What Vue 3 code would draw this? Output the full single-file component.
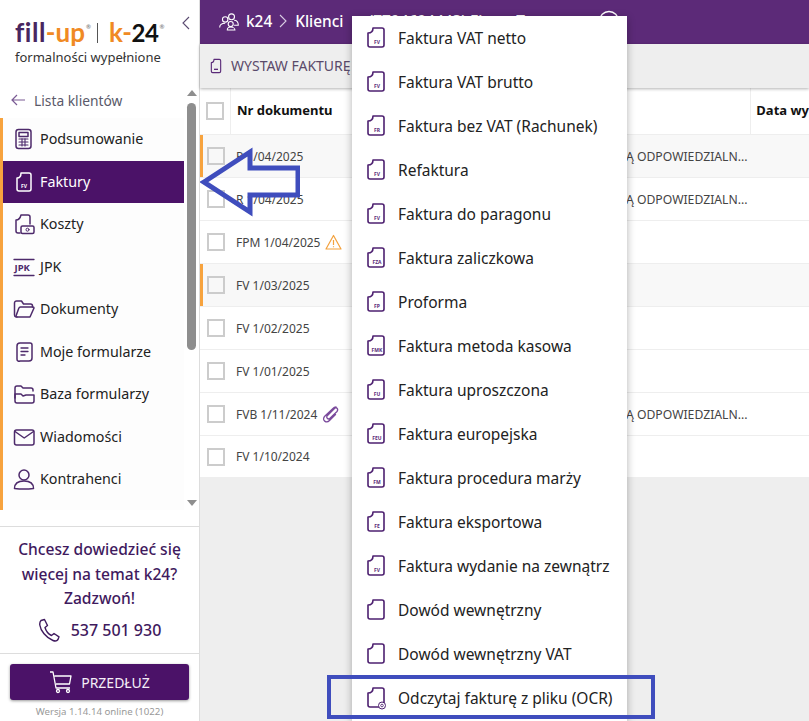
<script setup>
const nav = [
  { label: 'Podsumowanie', icon: 'calc' },
  { label: 'Faktury', icon: 'doc', active: true },
  { label: 'Koszty', icon: 'cost' },
  { label: 'JPK', icon: 'jpk' },
  { label: 'Dokumenty', icon: 'folder' },
  { label: 'Moje formularze', icon: 'form' },
  { label: 'Baza formularzy', icon: 'folders' },
  { label: 'Wiadomości', icon: 'mail' },
  { label: 'Kontrahenci', icon: 'user' }
]
const rows = [
  { no: 'P 1/04/2025', flag: true, odd: true, resp: true },
  { no: 'R 1/04/2025', resp: true },
  { no: 'FPM 1/04/2025', warn: true },
  { no: 'FV 1/03/2025', flag: true, odd: true },
  { no: 'FV 1/02/2025' },
  { no: 'FV 1/01/2025' },
  { no: 'FVB 1/11/2024', clip: true, resp: true },
  { no: 'FV 1/10/2024' }
]
const menu = [
  ['Faktura VAT netto', 'FV'],
  ['Faktura VAT brutto', 'FV'],
  ['Faktura bez VAT (Rachunek)', 'FR'],
  ['Refaktura', 'FV'],
  ['Faktura do paragonu', 'FV'],
  ['Faktura zaliczkowa', 'FZA'],
  ['Proforma', 'FP'],
  ['Faktura metoda kasowa', 'FMK'],
  ['Faktura uproszczona', 'FU'],
  ['Faktura europejska', 'FEU'],
  ['Faktura procedura marży', 'FM'],
  ['Faktura eksportowa', 'FE'],
  ['Faktura wydanie na zewnątrz', 'FV'],
  ['Dowód wewnętrzny', ''],
  ['Dowód wewnętrzny VAT', ''],
  ['Odczytaj fakturę z pliku (OCR)', 'OCR']
]
</script>

<template>
  <div class="app">
    <aside class="side">
      <div class="logo-area">
        <div class="logo">
          <span class="l-fill">fill</span><span class="l-dash">-</span><span class="l-up">up</span><sup class="l-r">®</sup>
          <span class="l-bar"></span>
          <span class="l-up l-k">k</span><span class="l-dash l-k">-</span><span class="l-24">24</span><sup class="l-r">®</sup>
        </div>
        <div class="tagline">formalności wypełnione</div>
        <svg class="collapse" width="8" height="14" viewBox="0 0 8 14"><path d="M7 1 1 7l6 6" fill="none" stroke="#5a4a70" stroke-width="1.1"/></svg>
      </div>
      <div class="scroller">
        <div class="back">
          <svg width="15" height="12" viewBox="0 0 15 12"><path d="M14 6H1M6 1 1 6l5 5" fill="none" stroke="#7a5a94" stroke-width="1.2"/></svg>
          <span>Lista klientów</span>
        </div>
        <nav class="nav">
          <div v-for="n in nav" :key="n.label" class="nav-item" :class="{ active: n.active }">
            <svg class="nav-ico" width="24" height="24" viewBox="0 0 24 24" fill="none" stroke="currentColor" stroke-width="1.5" stroke-linejoin="round" stroke-linecap="round">
              <template v-if="n.icon === 'calc'">
                <rect x="4" y="2.500" width="15" height="19" rx="2.500"/><rect x="7" y="5.500" width="9" height="4"/>
                <path d="M7 12h9M7 15h9M7 18h9M10 11.500v7.500M13 11.500v7.500" stroke-width="1.100"/>
              </template>
              <template v-else-if="n.icon === 'doc'">
                <path d="M9 3h8a2 2 0 0 1 2 2v14a2 2 0 0 1-2 2H7a2 2 0 0 1-2-2V8c2 0 4-1 4-5Z"/>
                <text x="9" y="18" class="mini">FV</text>
              </template>
              <template v-else-if="n.icon === 'cost'">
                <path d="M9 3h7a2 2 0 0 1 2 2v7M4 17V8c2 0 4-1 5-5M4 17v2a2 2 0 0 0 2 2h2"/>
                <rect x="9" y="14" width="13" height="7.500" rx="1.500"/><circle cx="15.500" cy="17.700" r="1.500" stroke-width="1"/>
              </template>
              <template v-else-if="n.icon === 'jpk'">
                <path d="M2 4.500h20M2 20.500h20" stroke-width="1.300"/>
                <text x="2.500" y="15.800" class="jpk">JPK</text>
              </template>
              <template v-else-if="n.icon === 'folder'">
                <path d="M5 20H4a2 2 0 0 1-1.500-2V6a2 2 0 0 1 2-2h5l2 3h7a2 2 0 0 1 2 2v1"/>
                <path d="M5 20h13l4-9a1 1 0 0 0-1-1H8.500a2 2 0 0 0-1.700 1.200L4 19"/>
              </template>
              <template v-else-if="n.icon === 'form'">
                <path d="M8 3h10a2 2 0 0 1 2 2v13a3 3 0 0 1-3 3H8a2 2 0 0 1-3-2V6a3 3 0 0 1 3-3Z"/>
                <path d="M9 8h7M9 11.500h7M9 15h4" stroke-width="1.300"/>
              </template>
              <template v-else-if="n.icon === 'folders'">
                <path d="M3 16V6a2 2 0 0 1 2-2h4l2 2h8a2 2 0 0 1 2 2v1"/>
                <path d="M3 12h6l2 2 3-1h8v6a2 2 0 0 1-2 2H5a2 2 0 0 1-2-2v-7Z"/>
              </template>
              <template v-else-if="n.icon === 'mail'">
                <rect x="2.500" y="5" width="19.500" height="15" rx="2"/><path d="m3 6.500 9.200 6.500 9.300-6.500"/>
              </template>
              <template v-else>
                <circle cx="12" cy="8" r="5"/><path d="M2.500 21.500c0-5 4-7.500 9.500-7.500s9.500 2.500 9.500 7.500c-6 .7-13 .7-19 0Z"/>
              </template>
            </svg>
            <span class="nav-label">{{ n.label }}</span>
          </div>
          <div class="nav-rest"></div>
        </nav>
        <div class="sb">
          <span class="sb-up"></span>
          <span class="sb-thumb"></span>
          <span class="sb-down"></span>
        </div>
      </div>
      <div class="promo">
        <div class="promo-t">Chcesz dowiedzieć się więcej na temat k24? Zadzwoń!</div>
        <div class="phone">
          <svg width="23" height="24" viewBox="0 0 23 24" fill="none" stroke="#3f1a5e" stroke-width="1.400" stroke-linejoin="round"><path d="M3 2.500 6.500 1.500l3 6-2.500 2c.8 3 3.500 6.500 6.500 8l2.500-2 5 3.300-1 2.700c-1 1.500-3 1.800-5 1C8 19.800 2.500 12.500 1.800 7c-.2-2 .2-3.500 1.200-4.500Z"/></svg>
          <span>537 501 930</span>
        </div>
      </div>
      <div class="foot">
        <button class="renew">
          <svg width="24" height="24" viewBox="0 0 24 24" fill="none" stroke="#fff" stroke-width="1.300" stroke-linejoin="round"><path d="M1 2h3l3 16h14M5.500 6H22l-1.500 8H7"/><circle cx="9" cy="21" r="1.500"/><circle cx="19" cy="21" r="1.500"/></svg>
          <span>PRZEDŁUŻ</span>
        </button>
        <div class="ver">Wersja 1.14.14 online (1022)</div>
      </div>
    </aside>

    <main class="main">
      <header class="top">
        <svg width="22" height="21" viewBox="0 0 26 24" fill="none" stroke="#fff" stroke-width="1.300"><circle cx="16" cy="6.500" r="3.500"/><circle cx="8.500" cy="9.500" r="3.200"/><circle cx="15" cy="15" r="3"/><path d="M2 19c0-3 2.500-5 6.500-5M11 22c0-2 1.500-3.500 4-3.500s5 1.500 5 3.500ZM19 10.500c3 0 5 2 5 6h-5"/></svg>
        <span class="crumb">k24</span>
        <svg class="chev" width="8" height="14" viewBox="0 0 8 14"><path d="m1 1 6 6-6 6" fill="none" stroke="#d9cde3" stroke-width="1.100"/></svg>
        <span class="crumb">Klienci</span>
        <span class="crumb hidden-name">(7794694443) Firma Testowa</span>
        <svg class="info" width="22" height="22" viewBox="0 0 22 22"><circle cx="11" cy="11" r="9.500" fill="none" stroke="#fff" stroke-width="1.400"/></svg>
      </header>
      <div class="toolbar">
        <svg width="16" height="18" viewBox="0 0 24 24" fill="none" stroke="#5a2a78" stroke-width="1.700" stroke-linejoin="round"><path d="M9 2h8a2 2 0 0 1 2 2v16a2 2 0 0 1-2 2H7a2 2 0 0 1-2-2V7c2 0 4-1 4-5Z"/><path d="M9 17h6" stroke-width="2"/></svg>
        <span>WYSTAW FAKTURĘ</span>
      </div>
      <div class="thead">
        <div class="c-check"><span class="box"></span></div>
        <div class="c-no"><span class="lift">Nr dokumentu</span></div>
        <div class="c-date"><span class="lift">Data wy</span></div>
      </div>
      <div v-for="r in rows" :key="r.no" class="row" :class="{ flag: r.flag, odd: r.odd }">
        <div class="r-check"><span class="box"></span></div>
        <div class="r-no">
          <span>{{ r.no }}</span>
          <svg v-if="r.warn" width="17" height="16" viewBox="0 0 17 16" fill="none" stroke="#f3a13c" stroke-width="1.200" stroke-linejoin="round"><path d="M8.500 1.500 16 15H1Z"/><path d="M8.500 6v5M8.500 12.200v1"/></svg>
          <svg v-if="r.clip" width="17" height="18" viewBox="0 0 17 18" fill="none" stroke="#7a4a9c" stroke-width="1.300" stroke-linecap="round"><path d="m14 2-9 9a2 2 0 0 0 2.500 2.800L15 6.500c2-2.500-1.500-5.500-3.500-3.500L2.500 11.500c-3 4 2 7 5 4l6-6"/></svg>
        </div>
        <div v-if="r.resp" class="r-resp">Ą ODPOWIEDZIALN...</div>
      </div>
    </main>

    <div class="menu">
      <div v-for="m in menu" :key="m[0]" class="menu-item">
        <svg class="m-ico" width="19" height="24" viewBox="0 0 19 24" fill="none" stroke="#4d2070" stroke-width="1.600" stroke-linejoin="round">
          <path d="M6 2h9a2 2 0 0 1 2 2v15a2 2 0 0 1-2 2H3a2 2 0 0 1-2-2V7c2 0 5-1 5-5Z"/>
          <template v-if="m[1] === 'OCR'">
            <circle cx="15" cy="19.500" r="3.500" fill="#fff" stroke-width="1"/><circle cx="15" cy="19.500" r="1.300" stroke-width=".8"/>
          </template>
          <text v-else-if="m[1]" x="10" y="18" text-anchor="middle" class="m-mini">{{ m[1] }}</text>
        </svg>
        <span class="m-label">{{ m[0] }}</span>
      </div>
    </div>

    <svg class="annot-arrow" width="100" height="76" viewBox="0 0 100 76">
      <path d="M4 36 50 6v16h48v27H50v17Z" fill="none" stroke="#3f4dbd" stroke-width="5"/>
    </svg>
    <div class="annot-box"></div>
  </div>
</template>

<style>
html, body { margin: 0; background: #fff; overflow: hidden; }
</style>

<style scoped>
.app {
  position: relative;
  width: 809px;
  height: 721px;
  display: flex;
  overflow: hidden;
  font-family: "Noto Sans", "Open Sans", sans-serif;
  color: #222;
}
.side {
  width: 199px;
  flex: none;
  border-right: 1px solid #ddd;
  display: flex;
  flex-direction: column;
  background: #fff;
}
.logo-area { position: relative; height: 85px; padding: 20px 0 0 15px; box-sizing: border-box; flex: none; }
.logo { font-family: Lato, "Open Sans", sans-serif; font-size: 26px; font-weight: 700; line-height: 25px; height: 25px; display: flex; align-items: flex-start; }
.l-fill { color: #48265f; letter-spacing: .5px; }
.l-dash, .l-up { color: #f08a24; }
.l-k { letter-spacing: -.5px; }
.l-24 { color: #111; font-size: 24px; letter-spacing: -.5px; }
.l-r { font-size: 6px; line-height: 10px; color: #888; margin: 2px 0 0 1px; }
.l-bar { width: 1px; height: 20px; background: #555; margin: 3px 11px 0 6px; }
.tagline { font-size: 13px; line-height: 16px; color: #333; margin-top: 4px; white-space: nowrap; }
.collapse { position: absolute; left: 182px; top: 16px; }
.scroller { flex: none; height: 425px; position: relative; overflow: hidden; }
.back { height: 33px; display: flex; align-items: center; gap: 8px; padding: 0 0 3px 11px; box-sizing: border-box; font-size: 13.800px; color: #5a5a6a; }
.nav { width: 184px; background: #fdfdfd; }
.nav-item { height: 42.500px; display: flex; align-items: center; padding-left: 12px; border-left: 3px solid #f7a33e; box-sizing: border-box; color: #4d2a6b; }
.nav-item.active { background: #4b1268; color: #fff; }
.nav-rest { height: 10px; border-left: 3px solid #f7a33e; }
.nav-ico { flex: none; margin-left: -3px; }
.nav-label { margin-left: 4px; padding-bottom: 1px; font-size: 14.300px; color: #222; white-space: nowrap; }
.nav-item.active .nav-label { color: #fff; }
.mini { font-size: 5px; font-weight: 700; fill: currentColor; stroke: none; }
.jpk { font-size: 9.500px; font-weight: 700; fill: currentColor; stroke: none; }
.sb { position: absolute; left: 184px; top: 0; bottom: 0; width: 15px; }
.sb-thumb { position: absolute; left: 3px; top: 18px; width: 9px; height: 247px; border-radius: 5px; background: #8e8e8e; }
.sb-up, .sb-down { position: absolute; left: 3px; width: 0; height: 0; border-left: 5px solid transparent; border-right: 5px solid transparent; }
.sb-up { top: 5px; border-bottom: 6px solid #8e8e8e; }
.sb-down { top: 415px; border-top: 6px solid #8e8e8e; }
.promo { border-top: 1px solid #ddd; margin-top: 16px; height: 127px; flex: none; box-sizing: border-box; text-align: center; padding: 10px 10px 0; color: #3f1a5e; }
.promo-t { font-size: 15.600px; line-height: 24.500px; font-weight: 500; }
.phone { display: flex; justify-content: center; align-items: center; gap: 10px; font-size: 16px; font-weight: 500; margin-top: 7px; }
.foot { border-top: 1px solid #ddd; flex: 1; padding: 10px 10px 0 10px; }
.renew { width: 179px; height: 36px; border: 0; border-radius: 3px; background: #4b1268; color: #f4eef8; display: flex; align-items: center; justify-content: center; gap: 8px; box-shadow: 0 1px 3px rgba(0, 0, 0, .4); font-family: inherit; font-size: 14px; padding: 0; }
.ver { text-align: center; color: #999; font-size: 9.700px; margin-top: 5px; white-space: nowrap; }
.main { flex: 1; min-width: 0; background: #eeeeee; display: flex; flex-direction: column; }
.top { height: 44px; flex: none; background: #5c2a78; display: flex; align-items: center; padding: 0 0 2px 18px; box-sizing: border-box; gap: 6px; color: #fff; font-size: 15.400px; font-weight: 500; }
.crumb { white-space: nowrap; }
.chev { margin: 0 2px 0 1px; }
.hidden-name { margin-left: 19px; }
.info { margin-left: 16px; }
.toolbar { height: 44px; flex: none; box-sizing: border-box; background: #eee; box-shadow: 0 1px 3px rgba(0, 0, 0, .3); position: relative; display: flex; align-items: center; gap: 7px; padding: 0 0 1px 8px; color: #5a4a6a; font-size: 14px; white-space: nowrap; }
.thead { height: 47px; flex: none; background: #fff; display: flex; align-items: stretch; border-bottom: 1px solid #eee; box-sizing: border-box; font-size: 13px; font-weight: 700; color: #111; }
.lift { padding-bottom: 2px; }
.c-check { width: 31px; display: flex; align-items: center; justify-content: center; padding-left: 1px; border-right: 1px solid #eee; box-sizing: border-box; }
.c-no { width: 521px; display: flex; align-items: center; padding-left: 6px; box-sizing: border-box; border-right: 1px solid #eee; white-space: nowrap; }
.c-date { display: flex; align-items: center; padding-left: 5px; white-space: nowrap; }
.box { display: block; width: 18px; height: 18px; border: 2px solid #ccc; box-sizing: border-box; background: #fff; }
.row { height: 43px; flex: none; background: #fff; display: flex; align-items: center; position: relative; border-bottom: 1px solid #eee; box-sizing: border-box; font-size: 12px; color: #444; white-space: nowrap; }
.row:last-child { height: 42px; }
.row.odd { background: #f8f8f8; }
.row.odd .box { background: #f8f8f8; }
.row.flag::before { content: ""; position: absolute; left: 0; top: 0; bottom: 0; width: 3px; background: #f7a33e; }
.r-check { width: 31px; display: flex; justify-content: center; }
.r-no { display: flex; align-items: center; gap: 5px; padding-left: 5px; }
.r-resp { position: absolute; left: 426px; white-space: nowrap; font-size: 12.200px; }
.menu { position: absolute; left: 352px; top: 16px; width: 275px; height: 705px; background: #fff; box-shadow: 0 2px 8px rgba(0, 0, 0, .3); display: flex; flex-direction: column; box-sizing: border-box; font-size: 15.500px; color: #222; }
.menu-item { height: 44px; flex: none; display: flex; align-items: center; padding-left: 15px; gap: 12px; white-space: nowrap; }
.m-label { padding-bottom: 1px; }
.m-ico { flex: none; }
.m-mini { font-size: 5px; font-weight: 700; fill: #5a2a78; stroke: none; }
.annot-arrow { position: absolute; left: 200px; top: 146px; }
.annot-box { position: absolute; left: 327px; top: 675px; width: 328px; height: 44px; box-sizing: border-box; border: 4.500px solid #3f4dbd; }
</style>
